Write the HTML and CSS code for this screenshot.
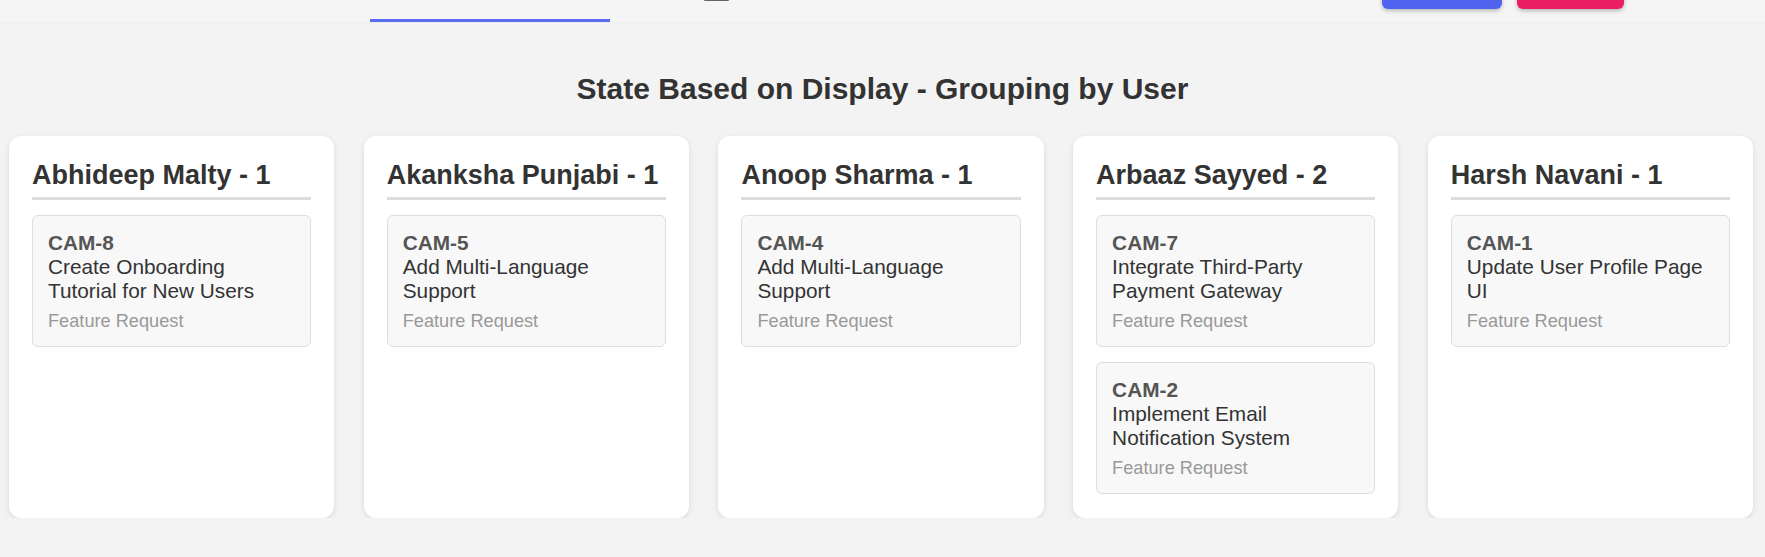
FILE: index.html
```html
<!DOCTYPE html>
<html lang="en">
<head>
<meta charset="utf-8">
<title>Grouping by User</title>
<link rel="stylesheet" href="styles.css">
</head>
<body>
<header class="topbar">
  <nav class="tabs">
    <span class="tab tab-active"></span>
    <span class="tab-icon"></span>
  </nav>
  <div class="actions">
    <button class="btn btn-blue" aria-label="Primary action"></button>
    <button class="btn btn-pink" aria-label="Secondary action"></button>
  </div>
</header>

<h1 class="page-title">State Based on Display - Grouping by User</h1>

<main class="board">
  <section class="column">
    <h2 class="column-title">Abhideep Malty - 1</h2>
    <div class="tasks">
      <div class="task">
        <div class="task-id">CAM-8</div>
        <div class="task-title">Create Onboarding Tutorial for New Users</div>
        <div class="task-type">Feature Request</div>
      </div>
    </div>
  </section>
  <section class="column">
    <h2 class="column-title">Akanksha Punjabi - 1</h2>
    <div class="tasks">
      <div class="task">
        <div class="task-id">CAM-5</div>
        <div class="task-title">Add Multi-Language Support</div>
        <div class="task-type">Feature Request</div>
      </div>
    </div>
  </section>
  <section class="column">
    <h2 class="column-title">Anoop Sharma - 1</h2>
    <div class="tasks">
      <div class="task">
        <div class="task-id">CAM-4</div>
        <div class="task-title">Add Multi-Language Support</div>
        <div class="task-type">Feature Request</div>
      </div>
    </div>
  </section>
  <section class="column">
    <h2 class="column-title">Arbaaz Sayyed - 2</h2>
    <div class="tasks">
      <div class="task">
        <div class="task-id">CAM-7</div>
        <div class="task-title">Integrate Third-Party Payment Gateway</div>
        <div class="task-type">Feature Request</div>
      </div>
      <div class="task">
        <div class="task-id">CAM-2</div>
        <div class="task-title">Implement Email Notification System</div>
        <div class="task-type">Feature Request</div>
      </div>
    </div>
  </section>
  <section class="column">
    <h2 class="column-title">Harsh Navani - 1</h2>
    <div class="tasks">
      <div class="task">
        <div class="task-id">CAM-1</div>
        <div class="task-title">Update User Profile Page UI</div>
        <div class="task-type">Feature Request</div>
      </div>
    </div>
  </section>
</main>
</body>
</html>
```

FILE: styles.css
```css
html, body {
  margin: 0;
  padding: 0;
}

body {
  background: #f3f3f3;
  font-family: "Liberation Sans", Arial, sans-serif;
  color: #333;
}

.topbar {
  height: 52px;
  margin-top: -30px;
  display: flex;
  background: #f5f5f5;
  box-shadow: 0 1px 1px rgba(0, 0, 0, 0.02);
  padding: 0 141px 0 370px;
}

.tabs {
  display: flex;
  align-items: stretch;
}

.tab {
  display: block;
  width: 240px;
  box-sizing: border-box;
}

.tab-active {
  border-bottom: 3px solid #5a6cf0;
}

.tab-icon {
  display: block;
  width: 25px;
  height: 2px;
  margin: 29px 0 0 94px;
  background: #666;
  border-radius: 1px;
}

.actions {
  margin-left: auto;
  display: flex;
  gap: 15px;
  align-items: flex-start;
}

.btn {
  display: block;
  height: 36px;
  margin-top: 3px;
  border: none;
  border-radius: 6px;
  box-shadow: 0 2px 4px rgba(0, 0, 0, 0.25);
  padding: 0;
}

.btn-blue {
  width: 120px;
  background: #4f63ee;
}

.btn-pink {
  width: 107px;
  background: #ea1f63;
}

.page-title {
  margin: 50px 0 30px;
  text-align: center;
  font-size: 30px;
  font-weight: bold;
  color: #333;
}

.board {
  display: flex;
  gap: 29.5px;
  padding: 0 12px 0 9px;
  align-items: stretch;
}

.column {
  flex: 1 1 0;
  min-width: 0;
  background: #fff;
  border-radius: 12px;
  padding: 24px 23px 24px;
  box-shadow: 0 2px 6px rgba(0, 0, 0, 0.1);
}

.column-title {
  margin: 0;
  font-size: 27px;
  font-weight: bold;
  color: #333;
  padding-bottom: 6px;
  border-bottom: 3px solid #ddd;
}

.tasks {
  display: flex;
  flex-direction: column;
  gap: 15px;
  margin-top: 15px;
}

.task {
  background: #f8f8f8;
  border: 1px solid #ddd;
  border-radius: 6px;
  padding: 15px 15px 14px;
  font-size: 20.8px;
  line-height: 24px;
}

.task-id {
  font-weight: bold;
  color: #555;
}

.task-title {
  color: #333;
}

.task-type {
  margin-top: 8px;
  font-size: 18.2px;
  line-height: 21px;
  color: #999;
}
```
